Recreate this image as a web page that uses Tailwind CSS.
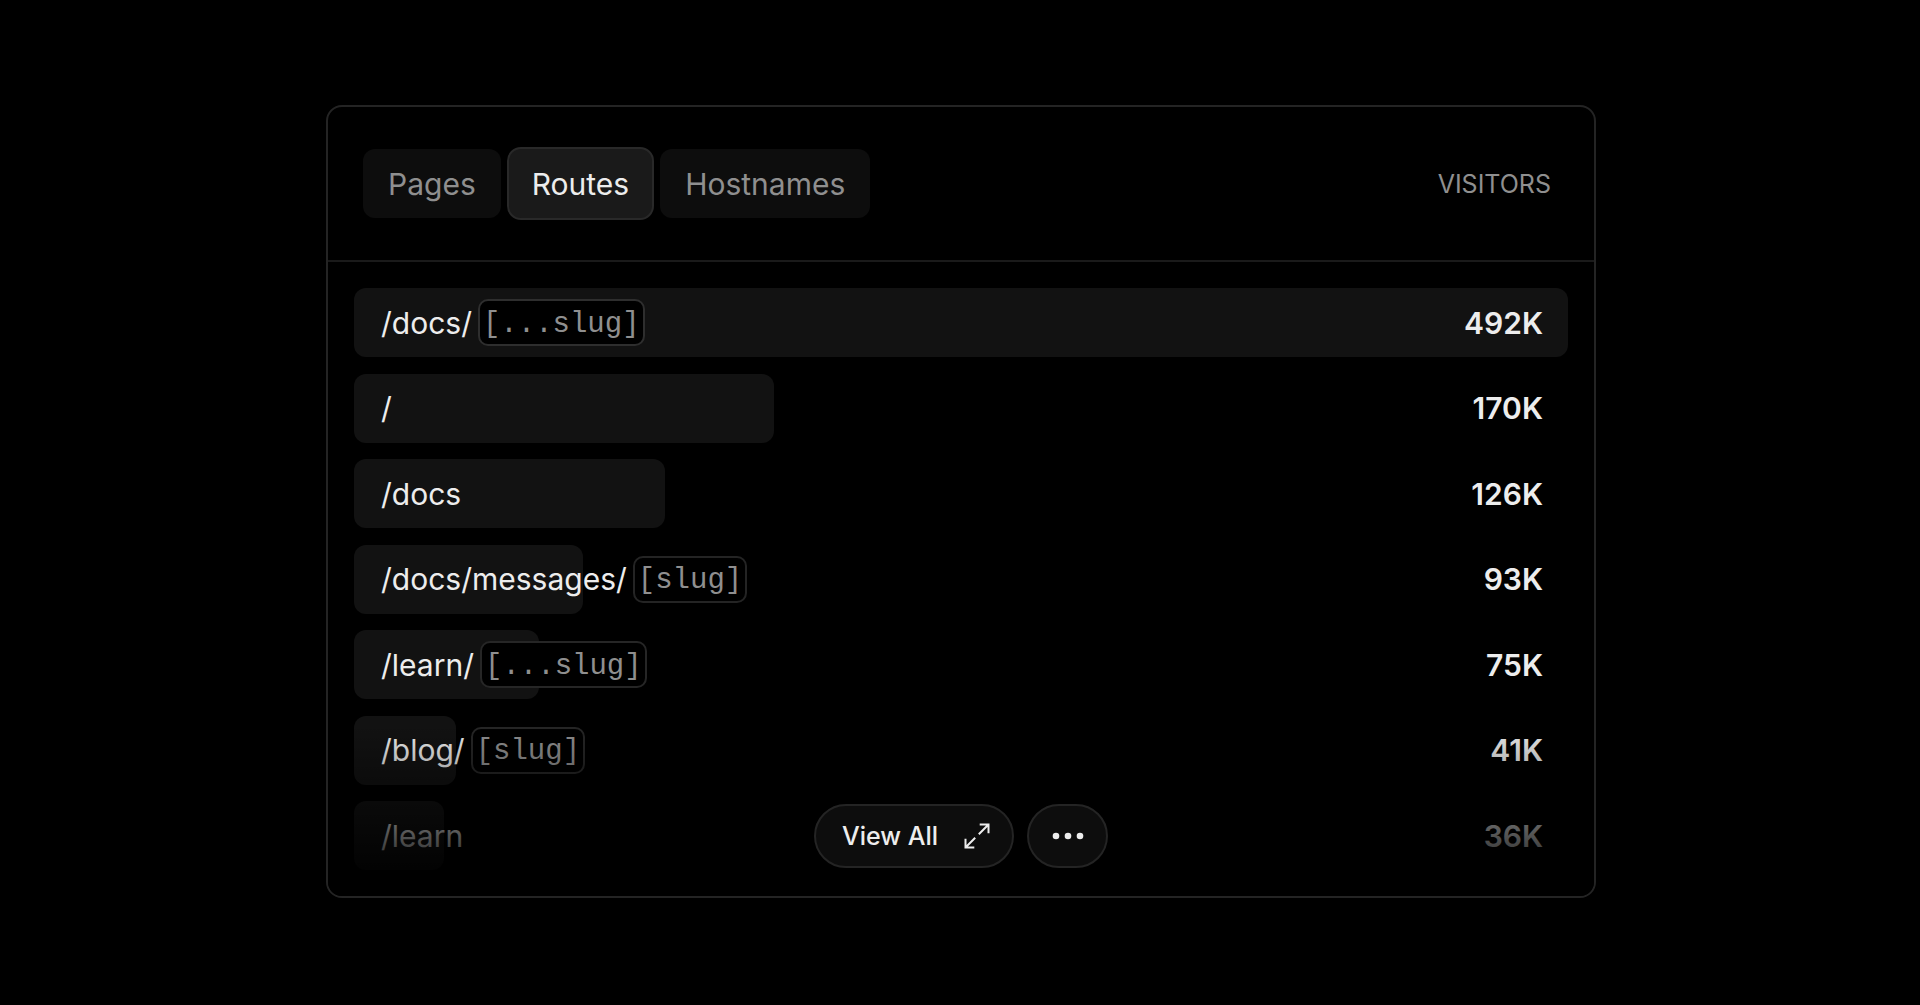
<!DOCTYPE html>
<html lang="en">
<head>
<meta charset="utf-8">
<meta name="viewport" content="width=device-width, initial-scale=1">
<title>Routes</title>
<script src="https://cdn.jsdelivr.net/npm/@tailwindcss/browser@4"></script>
</head>
<body class="bg-black font-['Inter',sans-serif] text-[30px] leading-9 text-[#ededed]">
<main class="flex min-h-screen items-center justify-center pb-0.5 pl-0.5">
  <section class="relative w-full max-w-[1270px] overflow-hidden rounded-2xl border-2 border-[#242424]" aria-label="Visitors by route">
    <header class="flex h-[155px] items-center justify-between border-b-2 border-[#1a1a1a] pr-[43px] pl-[35px]">
      <nav class="flex items-center gap-1.5" aria-label="Breakdown">
        <button type="button" class="h-[69px] rounded-xl bg-[#0d0d0d] px-[25px] text-[#8f8f8f]">Pages</button>
        <button type="button" class="h-[73px] rounded-[14px] border-2 border-[#292929] bg-[#1a1a1a] px-[23px]" aria-pressed="true">Routes</button>
        <button type="button" class="h-[69px] rounded-xl bg-[#0d0d0d] px-[25px] text-[#8f8f8f]">Hostnames</button>
      </nav>
      <span id="metric" class="text-[25px] text-[#8f8f8f]">VISITORS</span>
    </header>

    <table class="block px-[26px] py-[26px]" aria-describedby="metric">
      <tbody class="flex h-[582px] flex-col justify-between">
        <tr class="relative flex h-[69px] items-center justify-between pr-[25px] pl-[27px]">
          <td class="flex items-center gap-1.5"><span class="absolute inset-y-0 left-0 rounded-xl bg-[#121212]" style="width:100%"></span><span class="relative">/docs/</span><code class="relative flex h-[47px] items-center rounded-[10px] border-2 border-[#2e2e2e] bg-black px-[3px] pt-1 font-['Liberation_Mono',monospace] text-[29px] text-[#8f8f8f]">[...slug]</code></td>
          <td class="relative font-semibold">492K</td>
        </tr>
        <tr class="relative flex h-[69px] items-center justify-between pr-[25px] pl-[27px]">
          <td class="flex items-center gap-1.5"><span class="absolute inset-y-0 left-0 rounded-xl bg-[#121212]" style="width:34.6%"></span><span class="relative">/</span></td>
          <td class="relative font-semibold">170K</td>
        </tr>
        <tr class="relative flex h-[69px] items-center justify-between pr-[25px] pl-[27px]">
          <td class="flex items-center gap-1.5"><span class="absolute inset-y-0 left-0 rounded-xl bg-[#121212]" style="width:25.6%"></span><span class="relative">/docs</span></td>
          <td class="relative font-semibold">126K</td>
        </tr>
        <tr class="relative flex h-[69px] items-center justify-between pr-[25px] pl-[27px]">
          <td class="flex items-center gap-1.5"><span class="absolute inset-y-0 left-0 rounded-xl bg-[#121212]" style="width:18.9%"></span><span class="relative">/docs/messages/</span><code class="relative flex h-[47px] items-center rounded-[10px] border-2 border-[#242424] bg-black px-[3px] pt-1 font-['Liberation_Mono',monospace] text-[29px] text-[#8f8f8f]">[slug]</code></td>
          <td class="relative font-semibold">93K</td>
        </tr>
        <tr class="relative flex h-[69px] items-center justify-between pr-[25px] pl-[27px]">
          <td class="flex items-center gap-1.5"><span class="absolute inset-y-0 left-0 rounded-xl bg-[#121212]" style="width:15.2%"></span><span class="relative">/learn/</span><code class="relative flex h-[47px] items-center rounded-[10px] border-2 border-[#262626] bg-black px-[3px] pt-1 font-['Liberation_Mono',monospace] text-[29px] text-[#8f8f8f]">[...slug]</code></td>
          <td class="relative font-semibold">75K</td>
        </tr>
        <tr class="relative flex h-[69px] items-center justify-between pr-[25px] pl-[27px]">
          <td class="flex items-center gap-1.5"><span class="absolute inset-y-0 left-0 rounded-xl bg-[#121212]" style="width:8.4%"></span><span class="relative">/blog/</span><code class="relative flex h-[47px] items-center rounded-[10px] border-2 border-[#262626] bg-black px-[3px] pt-1 font-['Liberation_Mono',monospace] text-[29px] text-[#8f8f8f]">[slug]</code></td>
          <td class="relative font-semibold">41K</td>
        </tr>
        <tr class="relative flex h-[69px] items-center justify-between pr-[25px] pl-[27px]">
          <td class="flex items-center gap-1.5"><span class="absolute inset-y-0 left-0 rounded-xl bg-[#121212]" style="width:7.4%"></span><span class="relative">/learn</span></td>
          <td class="relative font-semibold">36K</td>
        </tr>
      </tbody>
    </table>

    <!-- Fade over the last rows, with the floating actions on top -->
    <div class="absolute inset-x-0 bottom-0 flex h-[172px] items-end justify-center gap-[13px] bg-linear-to-b from-transparent to-black pb-7">
      <button type="button" class="flex h-16 items-center gap-[26px] rounded-full border-2 border-[#242424] bg-[#0d0d0d] pr-[22px] pl-[26px] text-[25px] font-medium">
        View All
        <svg class="size-[26px]" viewBox="0 0 26 26" fill="none" stroke="currentColor" stroke-width="2" aria-hidden="true"><path d="M15.7 1.5H24.5V10.2M24.5 1.5L14.8 11.2M1.5 15.8V24.5H10.3M1.5 24.5L11.2 14.8"/></svg>
      </button>
      <button type="button" class="flex h-16 w-[81px] items-center justify-center rounded-full border-2 border-[#242424] bg-[#0d0d0d]" aria-label="More options">
        <svg class="h-2 w-8" viewBox="0 0 32 8" fill="currentColor" aria-hidden="true"><circle cx="4" cy="4" r="3.3"/><circle cx="16" cy="4" r="3.3"/><circle cx="28" cy="4" r="3.3"/></svg>
      </button>
    </div>
  </section>
</main>
</body>
</html>
